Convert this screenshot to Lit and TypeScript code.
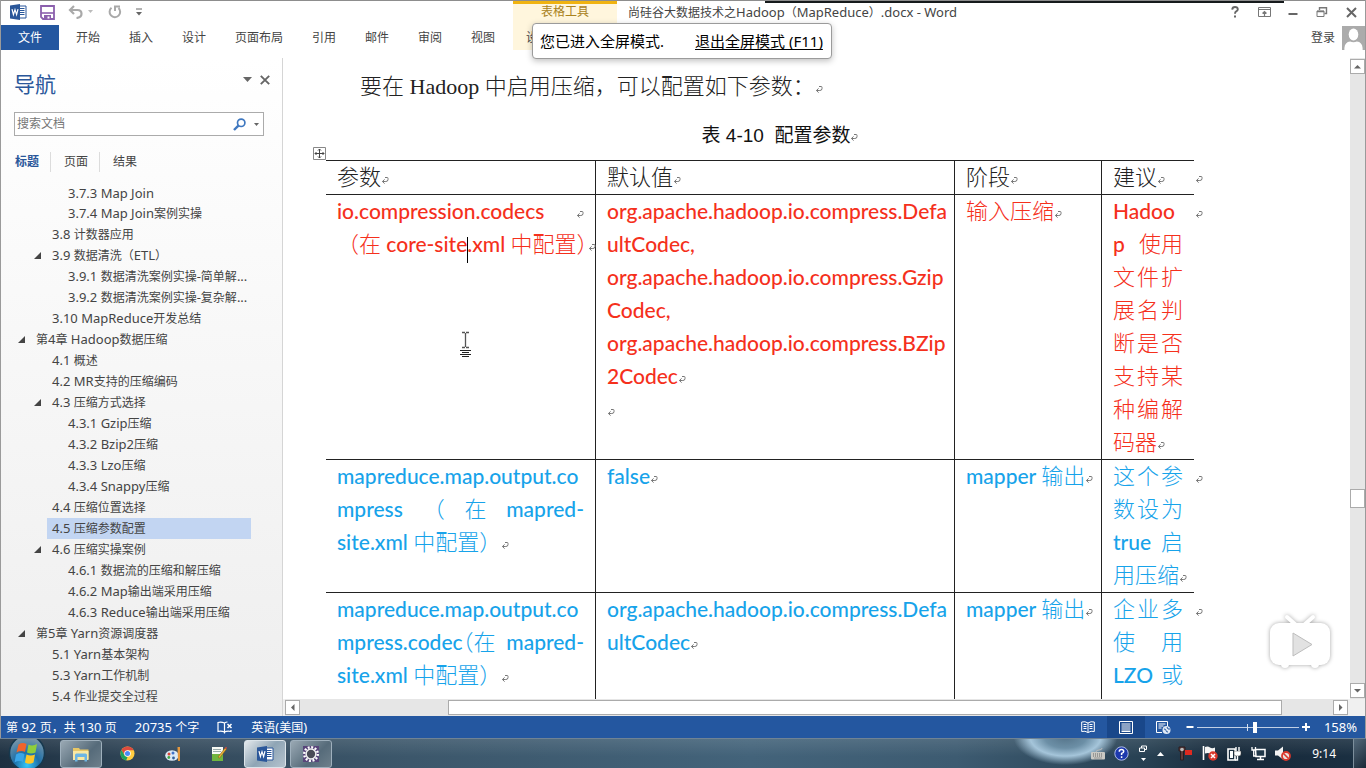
import { LitElement, html, svg, css } from "lit";
import { customElement, property } from "lit/decorators.js";
import { classMap } from "lit/directives/class-map.js";

const CJK = /([\u3000-\u303f\u4e00-\u9fff\uff00-\uffef]+)/;

/** Wraps each East Asian run in its own span so that it can have its own face and size. */
const mixed = (text: string) =>
  text.split(CJK).filter((t) => t !== "").map((t) => (CJK.test(t) ? html`<span class="cjk">${t}</span>` : t));

const mark = html`<svg class="mark" width="8" height="9" viewBox="0 0 8 9" aria-hidden="true">
  <path d="M4 1.500h2.200q.8 0 .8.8v1.400q0 1.800-2.200 1.800H1.500M3.600 3.400L1.400 5.500l2.200 2.100" fill="none" stroke="#777" stroke-width="1" />
</svg>`;

type Node = { level: number; label: string; open?: boolean; current?: boolean };

const outline: Node[] = [
  { level: 3, label: "3.7.3 Map Join" },
  { level: 3, label: "3.7.4 Map Join案例实操" },
  { level: 2, label: "3.8 计数器应用" },
  { level: 2, label: "3.9 数据清洗（ETL）", open: true },
  { level: 3, label: "3.9.1 数据清洗案例实操-简单解..." },
  { level: 3, label: "3.9.2 数据清洗案例实操-复杂解..." },
  { level: 2, label: "3.10 MapReduce开发总结" },
  { level: 1, label: "第4章 Hadoop数据压缩", open: true },
  { level: 2, label: "4.1 概述" },
  { level: 2, label: "4.2 MR支持的压缩编码" },
  { level: 2, label: "4.3 压缩方式选择", open: true },
  { level: 3, label: "4.3.1 Gzip压缩" },
  { level: 3, label: "4.3.2 Bzip2压缩" },
  { level: 3, label: "4.3.3 Lzo压缩" },
  { level: 3, label: "4.3.4 Snappy压缩" },
  { level: 2, label: "4.4 压缩位置选择" },
  { level: 2, label: "4.5 压缩参数配置", current: true },
  { level: 2, label: "4.6 压缩实操案例", open: true },
  { level: 3, label: "4.6.1 数据流的压缩和解压缩" },
  { level: 3, label: "4.6.2 Map输出端采用压缩" },
  { level: 3, label: "4.6.3 Reduce输出端采用压缩" },
  { level: 1, label: "第5章 Yarn资源调度器", open: true },
  { level: 2, label: "5.1 Yarn基本架构" },
  { level: 2, label: "5.3 Yarn工作机制" },
  { level: 2, label: "5.4 作业提交全过程" },
];

const UI_FONT = css`"Noto Sans", "Noto Sans CJK SC", sans-serif`;

const wordIcon = svg`
  <path d="M9 2h7v12H9z" fill="#fff" stroke="#2a579a" />
  <path d="M10 4.500h4.500M10 6.500h4.500M10 8.500h4.500M10 10.500h4.500" stroke="#2a579a" />
  <path d="M0 1.500L10 0v16L0 14.500z" fill="#2a579a" />
  <path d="M2 5.200l1.400 5.400L5 5.600l1.600 5L8 5.200" fill="none" stroke="#fff" stroke-width="1.200" />`;

@customElement("word-titlebar")
class WordTitlebar extends LitElement {
  static styles = css`
    :host { display: block; position: relative; background: #fff; font: 12px/16px ${UI_FONT}; color: #444; }
    .edge { position: absolute; left: 0; right: 0; top: 0; height: 1px; background: #8d8d8d; }
    .edge-dark { position: absolute; left: 56%; right: 81px; top: 1px; height: 2px; background: #161a1c; }
    button { border: 0; background: none; padding: 0; font: inherit; color: inherit; display: block; }
    svg { display: block; }
    .top { display: flex; height: 25px; align-items: center; padding-bottom: 1px; box-sizing: border-box; }
    .quick { display: flex; flex: none; align-items: center; gap: 13px; padding-left: 9px; width: 512px; box-sizing: border-box; }
    .context { align-self: stretch; flex: none; width: 104px; box-sizing: border-box; border-top: 4px solid #f0b310; background: #fff6dd; color: #a9821c; text-align: center; margin-bottom: -1px; }
    .doc { margin: 0 0 0 11px; font-size: 13px; font-weight: 400; flex: 1; white-space: nowrap; }
    .cjk { font-size: 12px; }
    .sys { display: flex; align-items: center; gap: 17px; padding-right: 8px; }
    .tabs { display: flex; height: 25px; align-items: center; }
    .file { flex: none; width: 58px; height: 25px; background: #2457a0; color: #fff; }
    .ribbon { display: flex; flex: none; gap: 29px; padding-left: 17px; width: 454px; box-sizing: border-box; white-space: nowrap; }
    .ctx-tabs { display: flex; align-items: center; gap: 29px; height: 25px; box-sizing: border-box; width: 104px; padding-left: 13px; background: #fff6dd; white-space: nowrap; overflow: hidden; }
    .user { margin-left: auto; display: flex; align-items: center; gap: 7px; }
    .rest { height: 8px; }
  `;
  render() {
    return html`
      <div class="edge"></div><div class="edge-dark"></div>
      <div class="top">
        <div class="quick">
          <svg width="17" height="16" viewBox="0 0 17 16">${wordIcon}</svg>
          <button aria-label="保存"><svg width="15" height="15" viewBox="0 0 15 15">
            <path d="M1 1h13v13H3l-2-2z" fill="#fff" stroke="#8b5fad" stroke-width="1.800" />
            <path d="M1 8h13" stroke="#8b5fad" stroke-width="1.600" /><path d="M4 10h7v4.500H4z" fill="#8b5fad" /><path d="M7.500 11.500h2v2h-2z" fill="#fff" />
          </svg></button>
          <button aria-label="撤消"><svg width="26" height="14" viewBox="0 0 26 14">
            <path d="M6 1L2 5l4 4M2 5h7.500q4 0 4 3.800T8.500 13" fill="none" stroke="#a9a9a9" stroke-width="2.200" /><path d="M20 5h5l-2.500 3z" fill="#bbb" />
          </svg></button>
          <button aria-label="恢复"><svg width="16" height="14" viewBox="0 0 16 14">
            <path d="M4.500 2.800A5.300 5.300 0 1 0 11.500 3M8 6V1.500h5" fill="none" stroke="#a9a9a9" stroke-width="2" />
          </svg></button>
          <button aria-label="自定义快速访问工具栏"><svg width="6" height="8" viewBox="0 0 6 8">
            <path d="M0 1h6" stroke="#666" /><path d="M0 4h6L3 7.500z" fill="#666" />
          </svg></button>
        </div>
        <div class="context">表格工具</div>
        <h1 class="doc">${mixed("尚硅谷大数据技术之Hadoop（MapReduce）.docx - Word")}</h1>
        <div class="sys">
          <button aria-label="帮助"><svg width="12" height="12" viewBox="0 0 12 12"><path d="M3.200 3.600Q3.400 1 6 1t2.800 2.200Q8.800 4.600 7.200 5.400 6 6 6 7.800" fill="none" stroke="#666" stroke-width="1.900" /><path d="M5 9.500h2v2H5z" fill="#666" /></svg></button>
          <button aria-label="功能区显示选项"><svg width="13" height="10" viewBox="0 0 13 10"><path d="M.5.5h12v9H.5zM.5 2.500h12" fill="none" stroke="#777" /><path d="M6.500 9V5M4.500 6.500l2-2 2 2" fill="none" stroke="#777" stroke-width="1.200" /></svg></button>
          <button aria-label="最小化"><svg width="10" height="12" viewBox="0 0 10 12"><path d="M.5 8h9" stroke="#666" stroke-width="2" /></svg></button>
          <button aria-label="向下还原"><svg width="14" height="11" viewBox="0 0 14 11"><path d="M4.500 3V.8h7V6.500H9.500" fill="none" stroke="#777" stroke-width="1.400" /><path d="M2 4h7v5.500H2z" fill="#fff" stroke="#777" /><path d="M2 4.500h7" stroke="#777" stroke-width="1.500" /></svg></button>
          <button aria-label="关闭"><svg width="11" height="11" viewBox="0 0 11 11"><path d="M1 1l9 9M10 1l-9 9" stroke="#666" stroke-width="2" /></svg></button>
        </div>
      </div>
      <div class="tabs">
        <button class="file">文件</button>
        <div class="ribbon">
          ${["开始", "插入", "设计", "页面布局", "引用", "邮件", "审阅", "视图"].map((t) => html`<button>${t}</button>`)}
        </div>
        <div class="ctx-tabs"><button>设计</button><button>布局</button></div>
        <div class="user">
          <button>登录</button>
          <svg width="23" height="24" viewBox="0 0 24 24" preserveAspectRatio="none"><path d="M0 0h24v24H0z" fill="#ababab" /><ellipse cx="12" cy="8.500" rx="5" ry="6" fill="#fff" /><path d="M2.500 24v-2q.5-6 6-6.500 3.500 1.500 7 0 5.500.5 6 6.500v2z" fill="#fff" /></svg>
        </div>
      </div>
      <div class="rest"></div>`;
  }
}

@customElement("word-navigation")
class WordNavigation extends LitElement {
  static styles = css`
    :host { display: flex; flex-direction: column; box-sizing: border-box; min-height: 0; overflow: hidden; border-right: 1px solid #d5d5d5; background: linear-gradient(#fff, #eee); font: 12px/16px ${UI_FONT}; color: #444; padding-bottom: 14px; }
    button { border: 0; background: none; padding: 0; font: inherit; color: inherit; display: block; }
    svg { display: block; }
    .head { display: flex; align-items: center; padding: 11px 12px 1px 13px; height: 30px; }
    h2 { margin: 0; flex: 1; font-size: 21px; line-height: 30px; font-weight: 400; color: #2a579a; }
    .tools { display: flex; align-items: center; gap: 8px; padding-bottom: 9px; }
    .search { display: flex; align-items: center; margin: 12px 18px 0 13px; height: 22px; flex: none; border: 1px solid #ababab; background: #fff; padding-right: 4px; gap: 8px; }
    .search label { display: flex; flex: 1; }
    input { border: 0; outline: 0; padding: 0 0 0 2px; width: 100%; background: none; font: inherit; color: #666; }
    input::placeholder { color: #767676; opacity: 1; }
    .views { display: flex; margin: 16px 0 0 13px; flex: none; }
    .views button { height: 20px; padding: 0 11px 0 13px; border-right: 1px solid #dcdcdc; }
    .views button:first-child { padding-left: 1px; font-weight: 700; color: #2a579a; }
    .views button:last-child { border: 0; }
    .tree { list-style: none; margin: 10px 0 0; padding: 0; overflow: hidden; flex: 1; min-height: 0; }
    li { display: flex; height: 21px; align-items: center; padding-right: 31px; }
    a { flex: 1; color: inherit; text-decoration: none; padding-left: 5px; font-size: 13px; line-height: 20px; white-space: nowrap; }
    .cjk { font-size: 12px; }
    .twist { width: 16px; padding-left: 3px; box-sizing: border-box; flex: none; }
    .l1 { padding-left: 14px; } .l2 { padding-left: 30px; } .l3 { padding-left: 46px; }
    .current a { background: #c2d5f2; }
  `;
  render() {
    return html`
      <div class="head">
        <h2>导航</h2>
        <div class="tools">
          <button aria-label="任务窗格选项"><svg width="9" height="5" viewBox="0 0 9 5"><path d="M0 0h9L4.500 5z" fill="#666" /></svg></button>
          <button aria-label="关闭"><svg width="10" height="10" viewBox="0 0 10 10"><path d="M.8.8l8.400 8.400M9.200.8L.8 9.200" stroke="#666" stroke-width="1.900" /></svg></button>
        </div>
      </div>
      <div class="search">
        <label><input type="text" placeholder="搜索文档" aria-label="搜索文档" /></label>
        <button aria-label="搜索"><svg width="13" height="13" viewBox="0 0 13 13"><circle cx="8.200" cy="4.800" r="3.700" fill="none" stroke="#3f78c0" stroke-width="1.700" /><path d="M5.400 7.600L1 12" stroke="#3f78c0" stroke-width="2.400" /></svg></button>
        <button aria-label="搜索选项"><svg width="5" height="3" viewBox="0 0 5 3"><path d="M0 0h5L2.500 3z" fill="#666" /></svg></button>
      </div>
      <div class="views"><button>标题</button><button>页面</button><button>结果</button></div>
      <ul class="tree">
        ${outline.map((n) => html`<li class=${classMap({ ["l" + n.level]: true, current: !!n.current })}>
          <span class="twist">${n.open ? html`<svg width="7" height="7" viewBox="0 0 7 7"><path d="M7 0v7H0z" fill="#444" /></svg>` : ""}</span>
          <a href="#">${mixed(n.label)}</a>
        </li>`)}
      </ul>`;
  }
}

@customElement("word-scrollbar")
class WordScrollbar extends LitElement {
  @property({ type: Boolean, reflect: true }) vertical = false;
  @property({ type: Number }) before = 0;
  @property({ type: Number }) thumb = 0;
  @property({ type: Number }) after = 0;
  static styles = css`
    :host { display: flex; background: #e6e6e6; align-items: stretch; padding: 1px 0; }
    :host([vertical]) { flex-direction: column; }
    button { flex: none; width: 15px; height: 15px; box-sizing: border-box; padding: 0; border: 1px solid #ababab; background: #fff; display: grid; place-items: center; }
    .thumb { box-sizing: border-box; border: 1px solid #ababab; background: #fff; }
    svg { display: block; }
  `;
  render() {
    const a = this.vertical ? ["M0 5.500h7L3.500 2z", "M0 2h7L3.500 5.500z"] : ["M5.500 0v7L2 3.500z", "M2 0v7l3.500-3.500z"];
    return html`
      <button aria-label="向前滚动"><svg width="7" height="7" viewBox="0 0 7 7"><path d=${a[0]} fill="#666" /></svg></button>
      <div style="flex-grow:${this.before}"></div>
      <div class="thumb" style="flex-grow:${this.thumb}"></div>
      <div style="flex-grow:${this.after}"></div>
      <button aria-label="向后滚动"><svg width="7" height="7" viewBox="0 0 7 7"><path d=${a[1]} fill="#666" /></svg></button>`;
  }
}

/** One visual line; parts spread across the cell when there is more than one. */
const line = (parts: string[], end = false) =>
  html`<div class="ln ${parts.length > 1 ? "spread" : ""}">${parts.map((p) => html`<span>${mixed(p)}</span>`)}${end ? mark : ""}</div>`;

@customElement("word-document")
class WordDocument extends LitElement {
  static styles = css`
    :host { display: block; overflow: hidden; background: #fff; position: relative; color: #222; }
    .page { margin-left: 33px; max-width: 920px; padding-top: 12px; }
    p { margin: 0; }
    .body { font: 22px/33px "Liberation Serif", serif; text-indent: 44px; height: 33px; white-space: nowrap; }
    .cjk { font-family: "Noto Sans CJK SC", sans-serif; font-weight: 300; }
    .half { font-feature-settings: "halt"; }
    .mark { display: inline-block; flex: none; vertical-align: baseline; }
    .wrap { position: relative; margin: 8px 0 0 10px; }
    .caption { font: 19px/33px "Liberation Sans", "Noto Sans CJK SC", sans-serif; margin-top: 16px; padding-left: 8px; text-align: center; height: 33px; white-space: pre; color: #111; }
    .handle { position: absolute; left: -13px; top: -13px; }
    table { border-spacing: 0; table-layout: fixed; width: 888px; font: 21px/31px Lato, "Noto Sans CJK SC", sans-serif; }
    .c1 { width: 270px; } .c2 { width: 359px; } .c3 { width: 147px; } .c4 { width: 92px; } .c5 { width: 20px; }
    th, td { padding: 0 11px; vertical-align: top; text-align: left; font-weight: 500; border-bottom: 1px solid #222; border-right: 1px solid #222; }
    th { border-top: 1px solid #222; }
    tr > :nth-child(n + 4) { border-right: 0; }
    tr > :nth-child(5) { border: 0; padding: 0 1px; }
    .ln { height: 33px; white-space: nowrap; }
    .ln .cjk, .body .cjk { font-size: 22px; line-height: 26px; }
    .spread { display: flex; justify-content: space-between; align-items: baseline; }
    .red { color: #f5301c; } .blue { color: #17a3ea; }
    .caret { display: inline-block; width: 1px; height: 26px; margin: -4px -1px -4px 0; background: #000; vertical-align: -7px; }
    .pointer { position: absolute; left: 176px; top: 273px; }
    .tv { position: absolute; right: 18px; bottom: 29px; filter: drop-shadow(0 0 2px rgba(0, 0, 0, 0.35)); }
  `;
  render() {
    return html`
      <div class="page">
        <p class="body">${mixed("要在 Hadoop 中启用压缩，可以配置如下参数：")}${mark}</p>
        <p class="caption">表 4-10  配置参数${mark}</p>
        <div class="wrap">
          <svg class="handle" width="13" height="13" viewBox="0 0 13 13"><path d="M.5.5h12v12H.5z" fill="#fff" stroke="#888" /><path d="M6.500 2v9M2 6.500h9M5 3.500L6.500 2 8 3.500M5 9.500L6.500 11 8 9.500M3.500 5L2 6.500 3.500 8M9.500 5L11 6.500 9.500 8" fill="none" stroke="#444" /></svg>
          <table>
            <colgroup><col class="c1" /><col class="c2" /><col class="c3" /><col class="c4" /><col class="c5" /></colgroup>
            <thead><tr>
              ${["参数", "默认值", "阶段", "建议"].map((h) => html`<th scope="col">${line([h], true)}</th>`)}
              <td>${line([], true)}</td>
            </tr></thead>
            <tbody>
              <tr class="red">
                <td><div class="ln spread"><span>io.compression.codecs</span>${mark}</div>
                  <div class="ln"><span class="cjk">（在</span> core-site<span class="caret"></span>.xml <span class="cjk">中配置<span class="half">）</span></span>${mark}</div></td>
                <td>${["org.apache.hadoop.io.compress.Defa", "ultCodec,", "org.apache.hadoop.io.compress.Gzip", "Codec,", "org.apache.hadoop.io.compress.BZip"].map((t) => line([t]))}${line(["2Codec"], true)}${line([], true)}</td>
                <td>${line(["输入压缩"], true)}</td>
                <td>${line(["Hadoo"])}${line(["p", "使用"])}${[..."文展断支种"].map((c, i) => line([c, "件名是持编"[i], "扩判否某解"[i]]))}${line(["码器"], true)}</td>
                <td>${line([], true)}</td>
              </tr>
              <tr class="blue">
                <td>${line(["mapreduce.map.output.co"])}${line(["mpress", "（", "在", "mapred-"])}${line(["site.xml 中配置）"], true)}</td>
                <td>${line(["false"], true)}</td>
                <td>${line(["mapper 输出"], true)}</td>
                <td>${line(["这", "个", "参"])}${line(["数", "设", "为"])}${line(["true", "启"])}${line(["用压缩"], true)}</td>
                <td>${line([], true)}</td>
              </tr>
              <tr class="blue">
                <td>${line(["mapreduce.map.output.co"])}
                  <div class="ln spread"><span>mpress.codec<span class="cjk"><span class="half">（</span>在</span></span><span>mapred-</span></div>
                  ${line(["site.xml 中配置）"], true)}</td>
                <td>${line(["org.apache.hadoop.io.compress.Defa"])}${line(["ultCodec"], true)}</td>
                <td>${line(["mapper 输出"], true)}</td>
                <td>${line(["企", "业", "多"])}${line(["使", "用"])}${line(["LZO", "或"])}${line([])}</td>
                <td>${line([], true)}</td>
              </tr>
            </tbody>
          </table>
        </div>
      </div>
      <svg class="pointer" width="13" height="27" viewBox="0 0 13 27"><path d="M3 1.500h3M7 1.500h3M6.500 2v14M3 16.500h3M7 16.500h3" stroke="#555" stroke-width="1.300" /><path d="M1 19.500h11M3 21.500h7M1 23.500h11M3 25.500h7" stroke="#222" /></svg>
      <svg class="tv" width="64" height="56" viewBox="0 0 64 56"><path d="M19 3l9 8M45 3l-9 8" stroke="#fff" stroke-width="4" stroke-linecap="round" /><rect x="2" y="9" width="60" height="42" rx="9" fill="#fff" /><circle cx="17" cy="50" r="4" fill="#fff" /><circle cx="47" cy="50" r="4" fill="#fff" /><path d="M25 19v23l19-11.500z" fill="#e2e2e2" stroke="#bdbdbd" /></svg>`;
  }
}

@customElement("word-status")
class WordStatus extends LitElement {
  static styles = css`
    :host { display: flex; align-items: center; height: 22px; background: #2457a0; color: #fff; font: 13px/16px ${UI_FONT}; padding: 0 8px 0 5px; }
    button { border: 0; background: none; padding: 0; font: inherit; color: inherit; display: block; }
    svg { display: block; }
    .cjk { font-size: 12px; }
    .left { display: flex; align-items: center; gap: 18px; flex: 1; }
    .view { height: 22px; width: 38px; display: grid; place-items: center; }
    .on { background: #19478a; }
    .zoom { display: flex; align-items: center; gap: 3px; padding-left: 3px; }
    .pct { padding-left: 11px; }
    input { appearance: none; width: 102px; height: 16px; margin: 0; background: linear-gradient(#d6e0ef, #d6e0ef) center / 1px 7px no-repeat, linear-gradient(#c0cfe5, #c0cfe5) center / 100% 1px no-repeat; }
    input::-webkit-slider-thumb { appearance: none; width: 4px; height: 11px; background: #fff; }
  `;
  render() {
    return html`
      <div class="left">
        <button>${mixed("第 92 页，共 130 页")}</button><button>${mixed("20735 个字")}</button>
        <button aria-label="校对"><svg width="16" height="13" viewBox="0 0 16 13"><path d="M7.500 2Q4 .5 1 1.500v9q3-1 6.500.5V2q1.500-.8 3-1M7.500 11v1.500M7.500 11q3-1.500 6.500-.5V9" fill="none" stroke="#fff" stroke-width="1.200" /><path d="M10.500 3l4 4M14.500 3l-4 4" stroke="#fff" stroke-width="1.500" /></svg></button>
        <button>${mixed("英语(美国)")}</button>
      </div>
      <button class="view" aria-label="阅读视图"><svg width="14" height="12" viewBox="0 0 14 12"><path d="M7 2Q4 0 .7 1v9.500Q4 9.500 7 11.500q3-2 6.300-1V1Q10 0 7 2zv9.500M2.500 3.500h3M2.500 5.500h3M2.500 7.500h3M8.500 3.500h3M8.500 5.500h3M8.500 7.500h3" fill="none" stroke="#fff" /></svg></button>
      <button class="view on" aria-label="页面视图"><svg width="14" height="13" viewBox="0 0 14 13"><path d="M.5.5h13v12H.5zM2.500 3h9M2.500 5h9M2.500 7h9M2.500 9h9M2.500 10.500h9" fill="none" stroke="#fff" /></svg></button>
      <button class="view" aria-label="Web 版式视图"><svg width="15" height="13" viewBox="0 0 15 13"><path d="M6 11.500H.5V.5h11V5M2.500 3h7M2.500 5h5M2.500 7h3" fill="none" stroke="#fff" /><circle cx="10.500" cy="9" r="4" fill="#dfe8f4" /><path d="M8 8q2 0 2 1.500T12 11M11 6l1 2 2 0" fill="none" stroke="#2457a0" /></svg></button>
      <div class="zoom">
        <button aria-label="缩小"><svg width="8" height="8" viewBox="0 0 8 8"><path d="M.5 4h7" stroke="#fff" stroke-width="2" /></svg></button>
        <input type="range" min="0" max="100" value="57" aria-label="显示比例" />
        <button aria-label="放大"><svg width="8" height="8" viewBox="0 0 8 8"><path d="M0 4h8M4 0v8" stroke="#fff" stroke-width="2" /></svg></button>
        <button class="pct">158%</button>
      </div>`;
  }
}

@customElement("desktop-taskbar")
class DesktopTaskbar extends LitElement {
  static styles = css`
    :host { display: flex; align-items: center; height: 30px; box-sizing: border-box; overflow: hidden; border-top: 1px solid #6f8395; color: #fff; font: 12px/16px ${UI_FONT};
      background: radial-gradient(ellipse 52px 28px at 78% -2px, #55748a 0, #6c8fa6 40%, #a5c5da 68%, transparent), linear-gradient(rgba(255, 255, 255, 0.1), transparent 60%), linear-gradient(90deg, #1d3041, #33495b 12%, #3c576b 30%, #43637a 55%, #3d5b71 70%, #274052 84%, #16293a 90%, #1b3042); }
    button { border: 0; background: none; padding: 0; font: inherit; color: inherit; display: grid; place-items: center; flex: none; }
    svg { display: block; }
    .start { width: 38px; margin: -4px 14px 0 8px; height: 36px; }
    .app { width: 42px; height: 28px; margin-right: 4px; box-sizing: border-box; border: 1px solid transparent; border-radius: 3px; }
    .run { border-color: #9fb0bd; background: linear-gradient(135deg, #9aa9b4, #566b7a 60%, #6d7f8b); }
    .active { border-color: #dbe4ea; background: linear-gradient(135deg, #e4e9ed, #8fa5b5 50%, #b4c3ce); }
    .tray { margin-left: auto; display: flex; align-items: center; gap: 9px; }
    .more { margin-right: 4px; }
    .clock { padding: 0 17px 0 12px; }
    .peek { width: 13px; height: 29px; border-left: 1px solid #7d8f9c; background: linear-gradient(135deg, #53687a, #1a2a38); }
  `;
  render() {
    return html`
      <button class="start" aria-label="开始"><svg width="38" height="38" viewBox="0 0 38 38">
        <defs><radialGradient id="orb" cx=".5" cy=".85" r=".8"><stop offset="0" stop-color="#35c8fb" /><stop offset=".45" stop-color="#1d6fa8" /><stop offset="1" stop-color="#7d97a8" /></radialGradient></defs>
        <circle cx="19" cy="19" r="17.500" fill="url(#orb)" stroke="#16394f" stroke-width="1.500" />
        <path d="M10.500 10.500q4-2.500 8-.5l-1.500 8q-4-2-8.500.5z" fill="#f0642b" /><path d="M20.500 10.500q4 2 8.500-.5l-1.500 8.500q-4.500 2-8.500 0z" fill="#8fce3c" />
        <path d="M8 20.500q4.500-2.500 8.500-.5L15 28q-4-2-8.500.5z" fill="#3aa5e8" /><path d="M18.500 20.500q4 2 8.500 0l-1.500 8q-4.500 2.500-8.500 0z" fill="#fcc629" />
      </svg></button>
      <button class="app run" aria-label="文件资源管理器"><svg width="18" height="16" viewBox="0 0 18 16"><path d="M1 2h6l1 1.500h8.500V13H1z" fill="#e9c765" /><path d="M1 5h15.500v9H1z" fill="#f9e8a4" /><path d="M3 9q0-1.500 1.500-1.500h9Q15 7.500 15 9v6.500h-2.500V11h-7v4.500H3z" fill="#6db5e4" /></svg></button>
      <button class="app" aria-label="Chrome"><svg width="15" height="15" viewBox="0 0 16 16"><circle cx="8" cy="8" r="7.500" fill="#ffcd40" /><path d="M1.500 4.300A7.500 7.500 0 0 1 14.600 4.500H8L4.800 9.500z" fill="#dd4b3e" /><path d="M1.500 4.300L5 10l3 2-1.500 3.400A7.500 7.500 0 0 1 1.500 4.300z" fill="#1fa15d" /><circle cx="8" cy="8" r="3.500" fill="#fff" /><circle cx="8" cy="8" r="2.700" fill="#4b8bf5" /></svg></button>
      <button class="app" aria-label="画图"><svg width="17" height="16" viewBox="0 0 17 16"><ellipse cx="7" cy="9.500" rx="6.800" ry="5.200" fill="#dbe9f6" /><circle cx="4" cy="8" r="1.500" fill="#d9473a" /><circle cx="8" cy="7" r="1.500" fill="#4273c8" /><circle cx="3.800" cy="11.500" r="1.400" fill="#44a645" /><circle cx="8.500" cy="12" r="1.400" fill="#335f9a" /><path d="M12.500 1h2.500v14h-2z" fill="#e5983d" /></svg></button>
      <button class="app" aria-label="记事本"><svg width="16" height="16" viewBox="0 0 16 16"><path d="M1 1h11v14H1z" fill="#f7f9f4" /><path d="M1 8h11v7H1z" fill="#70b53f" /><path d="M2 3.500h8M2 5.500h8" stroke="#9aa" /><path d="M7 11L14 2l1.500 1.200-7 9z" fill="#e9b13a" stroke="#75520f" stroke-width=".5" /><path d="M13.500 2.500L15 .8l1 .9-1 1.500z" fill="#d34b3c" /></svg></button>
      <button class="app active" aria-label="Word"><svg width="17" height="16" viewBox="0 0 17 16">${wordIcon}</svg></button>
      <button class="app run" aria-label="录屏"><svg width="18" height="18" viewBox="0 0 18 18"><path d="M1 1h16v16H1z" fill="#58457a" /><circle cx="9" cy="9" r="6.800" fill="none" stroke="#fff" stroke-width="2.400" stroke-dasharray="2 1.560" /><circle cx="9" cy="9" r="4.900" fill="#4a4b57" stroke="#f1f1f1" stroke-width="1.500" /></svg></button>
      <div class="tray">
        <svg width="14" height="12" viewBox="0 0 14 12"><path d="M5 4q0-2 3-2t3-2" fill="none" stroke="#bbb" /><rect y="4" width="14" height="7.500" rx="1" fill="#c9c9c4" /><path d="M2 6h10M2 8h10M3.500 10h7" stroke="#666" stroke-dasharray="1 1" /></svg>
        <svg width="15" height="15" viewBox="0 0 15 15"><circle cx="7.500" cy="7.500" r="6.700" fill="#1d39ad" stroke="#aebbe8" /><path d="M5.300 5.700Q5.300 3.600 7.500 3.600T9.700 5.400Q9.700 6.500 7.600 7.400v1.700M7.600 10.300v1.600" fill="none" stroke="#fff" stroke-width="1.500" /></svg>
        <svg width="10" height="18" viewBox="0 0 10 18"><path d="M3.500 3V1h5v3.500h-2M1.500 3h5v3.500h-5z" fill="none" stroke="#fff" /><path d="M3 13h5l-2.500 3z" fill="#fff" /></svg>
        <svg class="more" width="7" height="4" viewBox="0 0 7 4"><path d="M0 4h7L3.500 0z" fill="#fff" /></svg>
        <svg width="16" height="15" viewBox="0 0 16 15"><path d="M2 1h6v4H6.500v9h-3V5H2z" fill="#5e3a3a" stroke="#2a1c1f" /><circle cx="5" cy="3.500" r="1.800" fill="#bbb" /><path d="M8 4h7v5H8z" fill="#de2a20" /></svg>
        <svg width="16" height="15" viewBox="0 0 16 15"><path d="M1.500 0v14" stroke="#fff" stroke-width="1.600" /><path d="M3 1q3-1 5 .5t5 0v6q-3 1-5 0t-5 0z" fill="#f4f4f4" /><circle cx="11" cy="10" r="4.700" fill="#d9372c" /><path d="M9 8l4 4M13 8l-4 4" stroke="#fff" stroke-width="1.500" /></svg>
        <svg width="15" height="15" viewBox="0 0 15 15"><path d="M1 3h7v11H1z" fill="none" stroke="#fff" stroke-width="1.600" /><path d="M3 5h3v7H3z" fill="#fff" /><path d="M7 5h7v3q0 2-2 2H9.500Q7 10 7 8z" fill="#fff" stroke="#333" stroke-width=".5" /><path d="M9 1v4M12 1v4M10.500 10v4H8" stroke="#fff" stroke-width="1.400" fill="none" /></svg>
        <svg width="15" height="15" viewBox="0 0 15 15"><path d="M4.500 3.500h9.500v7H5zM6 13.500h7M9.500 11v2" fill="#20384a" stroke="#fff" stroke-width="1.500" /><path d="M1 1v3h3.500V1M2.700 4v6H5" fill="none" stroke="#fff" stroke-width="1.300" /></svg>
        <svg width="16" height="15" viewBox="0 0 16 15"><path d="M0 4.500h3L8 .5v13l-5-4H0z" fill="#f2f2f2" /><circle cx="11" cy="10" r="4" fill="#e9e1df" stroke="#d9372c" stroke-width="1.800" /><path d="M8.500 7.500l5 5" stroke="#d9372c" stroke-width="1.600" /></svg>
        <time class="clock">9:14</time>
      </div>
      <button class="peek" aria-label="显示桌面"></button>`;
  }
}

@customElement("app-root")
class AppRoot extends LitElement {
  static styles = css`
    :host { display: flex; flex-direction: column; height: 100vh; overflow: hidden; position: relative; background: #fff; }
    .window { flex: 1; min-height: 0; display: flex; flex-direction: column; border-left: 1px solid #9a9a9a; border-right: 1px solid #9a9a9a; box-sizing: border-box; }
    .work { flex: 1; min-height: 0; display: grid; grid-template-columns: 282px minmax(0, 1fr); grid-template-rows: minmax(0, 1fr); }
    .pane { display: grid; grid-template-columns: minmax(0, 1fr) 15px; grid-template-rows: minmax(0, 1fr) 17px; min-height: 0; background: #f0f0f0; }
    .hbar { margin: 0 2px; }
    .toast { position: absolute; left: 532px; top: 23px; display: flex; align-items: center; gap: 31px; box-sizing: border-box; height: 36px; padding: 0 8px 0 7px; border: 1px solid #9b9b9b; border-radius: 4px; background: #fff; box-shadow: 0 2px 6px rgba(0, 0, 0, 0.25); font: 15px/20px "Noto Sans", "Noto Sans CJK SC", sans-serif; color: #000; white-space: nowrap; }
    .toast a { color: #000; text-underline-offset: 2px; }
  `;
  render() {
    return html`
      <div class="window">
        <word-titlebar></word-titlebar>
        <div class="work">
          <word-navigation></word-navigation>
          <div class="pane">
            <word-document></word-document>
            <word-scrollbar vertical before="416" thumb="17" after="175"></word-scrollbar>
            <word-scrollbar class="hbar" before="148" thumb="833" after="51"></word-scrollbar>
          </div>
        </div>
        <word-status></word-status>
      </div>
      <desktop-taskbar></desktop-taskbar>
      <div class="toast" role="status"><span>您已进入全屏模式.</span><a href="#">退出全屏模式 (F11)</a></div>`;
  }
}
